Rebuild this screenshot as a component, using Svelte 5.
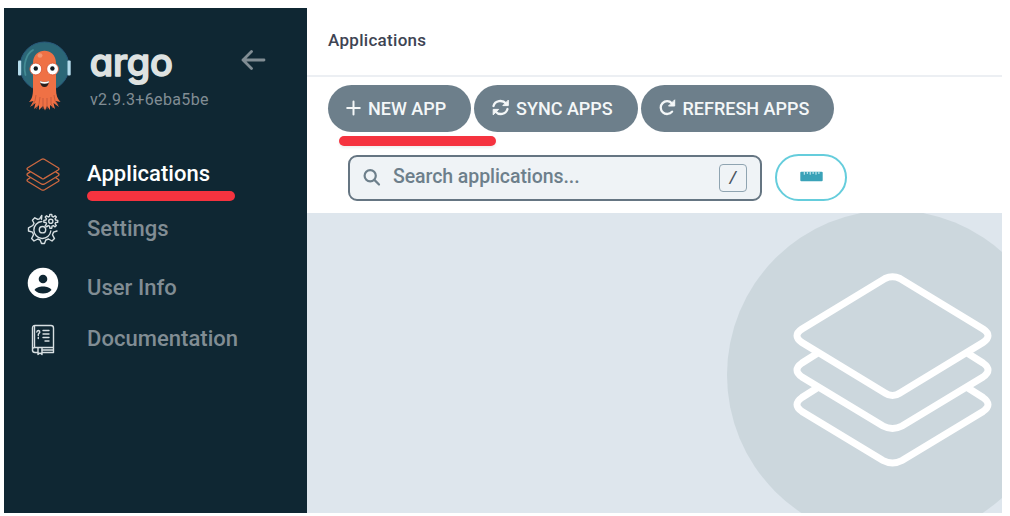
<script lang="ts">
  const nav = [
    { id: 'apps', label: 'Applications', active: true },
    { id: 'settings', label: 'Settings', active: false },
    { id: 'user', label: 'User Info', active: false },
    { id: 'docs', label: 'Documentation', active: false }
  ];

  // Outline of a cog: alternating root and tip points around a centre.
  function cog(cx: number, cy: number, teeth: number, root: number, tip: number): string {
    const pts: string[] = [];
    const step = (Math.PI * 2) / teeth;
    for (let i = 0; i < teeth; i++) {
      const a = i * step - Math.PI / 2;
      for (const [off, r] of [[-0.32, root], [-0.17, tip], [0.17, tip], [0.32, root]]) {
        const t = a + off * step;
        pts.push(`${(cx + r * Math.cos(t)).toFixed(2)} ${(cy + r * Math.sin(t)).toFixed(2)}`);
      }
    }
    return 'M' + pts.join('L') + 'Z';
  }
</script>

{#snippet layers()}
  <path d="M92 5.5 Q99.5 2 107 5.5 L190 56 Q200 62.700 190 69.500 L107 120 Q99.500 125 92 120 L9 69.500 Q-1 62.700 9 56 Z" />
  <path d="M24 80.500 L9 90 Q-1 97 9 104 L90 153 Q99.500 158 109 153 L190 104 Q200 97 190 90 L175 80.500" />
  <path d="M24 115 L9 124.500 Q-1 131.500 9 138.500 L90 187.500 Q99.500 192.500 109 187.500 L190 138.500 Q200 131.500 190 124.500 L175 115" />
{/snippet}

<div class="shell">
  <aside>
    <div class="brand">
      <svg class="mascot" width="54" height="72" viewBox="0 0 54 72">
        <circle cx="26.500" cy="25.500" r="24.500" fill="#2b6777" stroke="#28587a" stroke-width="1" />
        <rect x="0" y="19.500" width="3.200" height="15" rx="1" fill="#b4dcec" />
        <rect x="49.500" y="19.500" width="3.200" height="15" rx="1" fill="#b4dcec" />
        <path d="M7.500 34 C5 24 8 13 15 9" fill="none" stroke="#438b94" stroke-width="1.800" stroke-linecap="round" />
        <path d="M15 22 C15 5.500 38 5.500 38 22 V48 C38 54 39.500 58 42.500 61 L37.500 60 L41 66 L35.500 62 L37 68 L32 64 L32 69 L29 65 L27 69.500 L25 65 L21 69 L21 64 L16 68 L17.500 62 L12 66 L15.500 60 L11 61 C14 58 15 54 15 48 Z" fill="#ef7145" />
        <path d="M18 54 Q18 60 14 65 M22 56 Q22 64 18 68 M25 57 V68 M29 57 V68 M33 56 Q32 63 35 67 M36 54 Q36 60 40 64" fill="none" stroke="#b65136" stroke-width=".7" />
        <ellipse cx="22" cy="14.500" rx="2.500" ry="2.200" fill="#f49672" />
        <circle cx="17.800" cy="28" r="5.900" fill="#fff" stroke="#d8502d" stroke-width=".8" />
        <circle cx="34.600" cy="28" r="5.900" fill="#fff" stroke="#d8502d" stroke-width=".8" />
        <circle cx="17.800" cy="27.500" r="2.200" fill="#111b22" />
        <circle cx="34.400" cy="27.500" r="2.200" fill="#111b22" />
        <path d="M22 40 Q26.500 42 31 40 Q30.500 46 26.500 46 Q22.500 46 22 40Z" fill="#28201f" />
        <path d="M22 40 Q26.500 42 31 40 L30.500 42 Q26.500 43.500 22.500 42Z" fill="#fff" />
      </svg>
      <div class="words">
        <svg class="wordmark" width="90" height="49" viewBox="0 0 90 49"><text x="-0.3" y="35" textLength="83.300" lengthAdjust="spacing">argo</text></svg>
        <div class="version">v2.9.3+6eba5be</div>
      </div>
      <svg class="back" width="26" height="22" viewBox="0 0 26 22"><path d="M11.500 2.500 L3 11 L11.500 19.500 M3 11 H24" /></svg>
    </div>
    <nav>
      {#each nav as item}
        <a class={item.id} class:active={item.active}>
          <span class="icon">
            {#if item.id === 'apps'}
              <svg width="35" height="33" viewBox="-1 -2 207 197" class="layers-small">{@render layers()}</svg>
            {:else if item.id === 'settings'}
              <svg width="32" height="32" viewBox="0 0 32 32" class="line">
                <path d="M14.500 6.200 L14.800 2.500 L12.600 5.800 L10.800 6.400 L7.800 4.800 L5.400 7.200 L7 10.300 L5.800 12.500 L1.500 14.800 V18 L5.500 19.200 L6.600 21.700 L4.600 25.500 L7 28 L10.800 26 L13.100 27 L14.500 30.500 H17.500 L18.800 27 L21.500 26 L25 28 L27.500 25.600 L25.500 21.800 L26.500 19.200 L30 18" />
                <path d="M14.800 8.500 A8.500 8.500 0 1 0 23.800 18" />
                <circle cx="15.500" cy="16.700" r="3.200" />
                <path d={cog(23.8, 8.3, 8, 5, 7)} />
                <circle cx="23.800" cy="8.300" r="2.100" />
              </svg>
            {:else if item.id === 'user'}
              <svg width="32" height="32" viewBox="0 0 32 32">
                <circle cx="16" cy="16" r="15.300" fill="#fff" />
                <circle cx="16" cy="12" r="4.300" fill="#0f2733" />
                <path d="M7.500 23 C9.500 18.300 22.500 18.300 24.500 23 C20.500 27.800 11.500 27.800 7.500 23Z" fill="#0f2733" />
              </svg>
            {:else}
              <svg width="24" height="32" viewBox="0 0 24 32" class="line">
                <path d="M1.500 27 V4 Q1.500 1.500 4 1.500 H20 Q22.500 1.500 22.500 4 V23.500 H4 Q1.500 23.500 1.500 26 Q1.500 28.500 4 28.500 H7 M11 28.500 H22.500 V23.500 M3.500 2 V23.500 M11 26 H22.500" />
                <path d="M7 24 V30.500 L9 29 L11 30.500 V24" />
                <path d="M5.800 8 Q6 6.500 7.500 6.500 Q9 6.700 8.800 8.300 L7.300 10.200 V11.500 M7.300 13.500 V14.500 M12 6.500 H18 M12 10 H18 M12 13.500 H18 M14 17 H18" />
              </svg>
            {/if}
          </span>
          <span class="label">{item.label}</span>
        </a>
      {/each}
    </nav>
    <i class="mark nav-mark"></i>
  </aside>

  <main>
    <header><span>Applications</span></header>
    <section class="tools">
      <div class="buttons">
        <button class="new">
          <svg width="16" height="16" viewBox="0 0 16 16"><path d="M7.500 1.600 V14.400 M1.200 8 H13.800" /></svg>
          <span>NEW APP</span>
        </button>
        <button class="sync">
          <svg width="18" height="18" viewBox="0 0 18 18">
            <path d="M1.500 7 C3 1.400 10.500 .4 14 4.600 M15.500 10 C14 15.600 7 16.600 3.500 12.400" />
            <path class="tip" d="M16.300 1.500 V6.600 H11.200Z M1.200 15.500 V10.400 H6.300Z" />
          </svg>
          <span>SYNC APPS</span>
        </button>
        <button class="refresh">
          <svg width="18" height="18" viewBox="0 0 18 18">
            <path d="M12.800 4.200 A6.400 6.400 0 1 0 13.100 12.600" />
            <path class="tip" d="M15.700 1.200 V7 H9.900Z" />
          </svg>
          <span>REFRESH APPS</span>
        </button>
      </div>
      <div class="filters">
        <div class="search">
          <svg width="18" height="18" viewBox="0 0 18 18"><circle cx="7.200" cy="6.700" r="5.600" /><path d="M11.400 10.900 L16 15.500" /></svg>
          <span>Search applications...</span>
          <kbd>/</kbd>
        </div>
        <button class="ruler" aria-label="Health">
          <svg width="23" height="11" viewBox="0 0 23 11">
            <rect x=".3" y=".7" width="22.400" height="9.500" rx="1" />
            <path d="M4.300 .5 V3.700 M7.300 .5 V3 M10.200 .5 V3.700 M13.100 .5 V3 M16 .5 V3.700 M18.900 .5 V3" />
          </svg>
        </button>
      </div>
      <i class="mark tool-mark"></i>
    </section>
    <section class="empty">
      <div class="disc">
        <svg width="199" height="194" viewBox="0 0 199 194">{@render layers()}</svg>
      </div>
    </section>
  </main>
</div>

<style>
  :global(body) { background: #fff; }
  .shell { box-sizing: border-box; width: 1010px; height: 516px; padding: 8px 8px 3px 4px; display: flex; font-family: Roboto, sans-serif; font-weight: 500; overflow: hidden; }
  svg { display: block; flex: none; }
  aside { position: relative; width: 303px; flex: none; background: #0f2733; }
  .brand { display: flex; height: 140px; box-sizing: border-box; padding: 33px 0 0 14px; }
  .words { margin-left: 18px; width: 134px; }
  .wordmark { overflow: visible; font-family: Inter, sans-serif; font-size: 38px; font-weight: 500; font-feature-settings: 'cv11'; fill: #dee2e1; stroke: #dee2e1; stroke-width: 1.5; stroke-linejoin: round; }
  .version { font-size: 16px; line-height: 19px; font-weight: 400; letter-spacing: .36px; color: #818d94; white-space: nowrap; }
  .back { margin: 8px 0 0 16px; fill: none; stroke: #818d94; stroke-width: 2.8; stroke-linecap: round; stroke-linejoin: round; }
  nav { display: flex; flex-direction: column; }
  nav a { display: flex; align-items: center; height: 50px; color: #818d94; font-size: 22px; letter-spacing: .04px; }
  .icon { width: 78px; display: flex; justify-content: center; flex: none; }
  .apps .icon, .settings .icon { padding-top: 2px; }
  .docs .icon { padding-top: 3px; }
  .label { margin-left: 5px; }
  .line { fill: none; stroke: #d7dfe2; stroke-width: 1.4; stroke-linejoin: round; stroke-linecap: round; }
  .layers-small { fill: none; stroke: #cd6840; stroke-width: 8; }
  nav .active { color: #fff; }
  nav .settings { height: 60px; }
  nav .user { height: 58px; }
  nav .docs { height: 44px; }
  .user .icon { padding-bottom: 8px; }
  .mark { position: absolute; display: block; height: 10px; border-radius: 5px; background: #f5333f; }
  .nav-mark { left: 83px; top: 183px; width: 148px; }
  .tool-mark { left: 32px; top: 59px; width: 157px; box-shadow: 0 2px 3px #0001; }
  main { flex: 1; min-width: 0; display: flex; flex-direction: column; }
  header { height: 69px; box-sizing: border-box; border-bottom: 2px solid #eceff3; padding-left: 21px; display: flex; align-items: center; font-size: 17px; letter-spacing: .3px; color: #3e4453; }
  header span { margin-top: -4px; }
  .tools { position: relative; height: 136px; box-sizing: border-box; padding: 8px 0 0 21px; }
  button { font: inherit; border: 0; padding: 0; margin: 0; }
  .buttons { display: flex; gap: 3px; }
  .buttons button { display: flex; align-items: center; height: 47px; border-radius: 24px; background: #6d7f8b; color: #f4f7f8; font-size: 18px; box-sizing: border-box; padding: 0 0 1px 18px; white-space: nowrap; }
  .buttons svg { fill: none; stroke: #f4f7f8; stroke-width: 2.3; stroke-linecap: round; stroke-linejoin: round; }
  .buttons .tip { fill: #f4f7f8; stroke-width: 1; }
  .buttons .new svg { stroke-width: 2; }
  .buttons .new { width: 143px; }
  .buttons .new span { margin-left: 6px; }
  .buttons .sync { width: 163.5px; }
  .buttons .sync span { margin-left: 6px; }
  .buttons .refresh { width: 193.5px; }
  .buttons .refresh span { margin-left: 6px; }
  .filters { display: flex; gap: 13px; padding: 22px 0 0 20px; align-items: center; }
  .search { width: 414px; height: 46px; box-sizing: border-box; border: 2px solid #657582; border-radius: 9px; background: #eff3f6; display: flex; align-items: center; padding: 0 13px; color: #6d7f8b; font-size: 19.5px; }
  .search svg { fill: none; stroke: #6d7f8b; stroke-width: 2.2; stroke-linecap: round; }
  .search span { margin: -2px 0 0 12px; flex: 1; letter-spacing: -.07px; }
  kbd { width: 28px; height: 28px; box-sizing: border-box; border: 1.5px solid #8fa4b1; border-radius: 4px; font: italic 500 17px/25px Roboto, sans-serif; text-align: center; color: #4a5560; }
  .ruler { width: 72px; height: 47px; box-sizing: border-box; border: 2px solid #65cddc; border-radius: 24px; background: #fff; display: flex; align-items: center; justify-content: center; }
  .ruler svg { fill: #3aa2b8; stroke: none; margin-top: -3px; }
  .ruler path { stroke: #d9f0f4; stroke-width: 1; }
  .empty { flex: 1; background: #dee6ed; overflow: hidden; }
  .disc { width: 330px; height: 330px; margin: -3px 0 0 420px; border-radius: 50%; background: #ccd7dd; display: flex; align-items: center; justify-content: center; }
  .disc svg { fill: none; stroke: #fff; stroke-width: 7; margin-top: -10px; overflow: visible; }
</style>
